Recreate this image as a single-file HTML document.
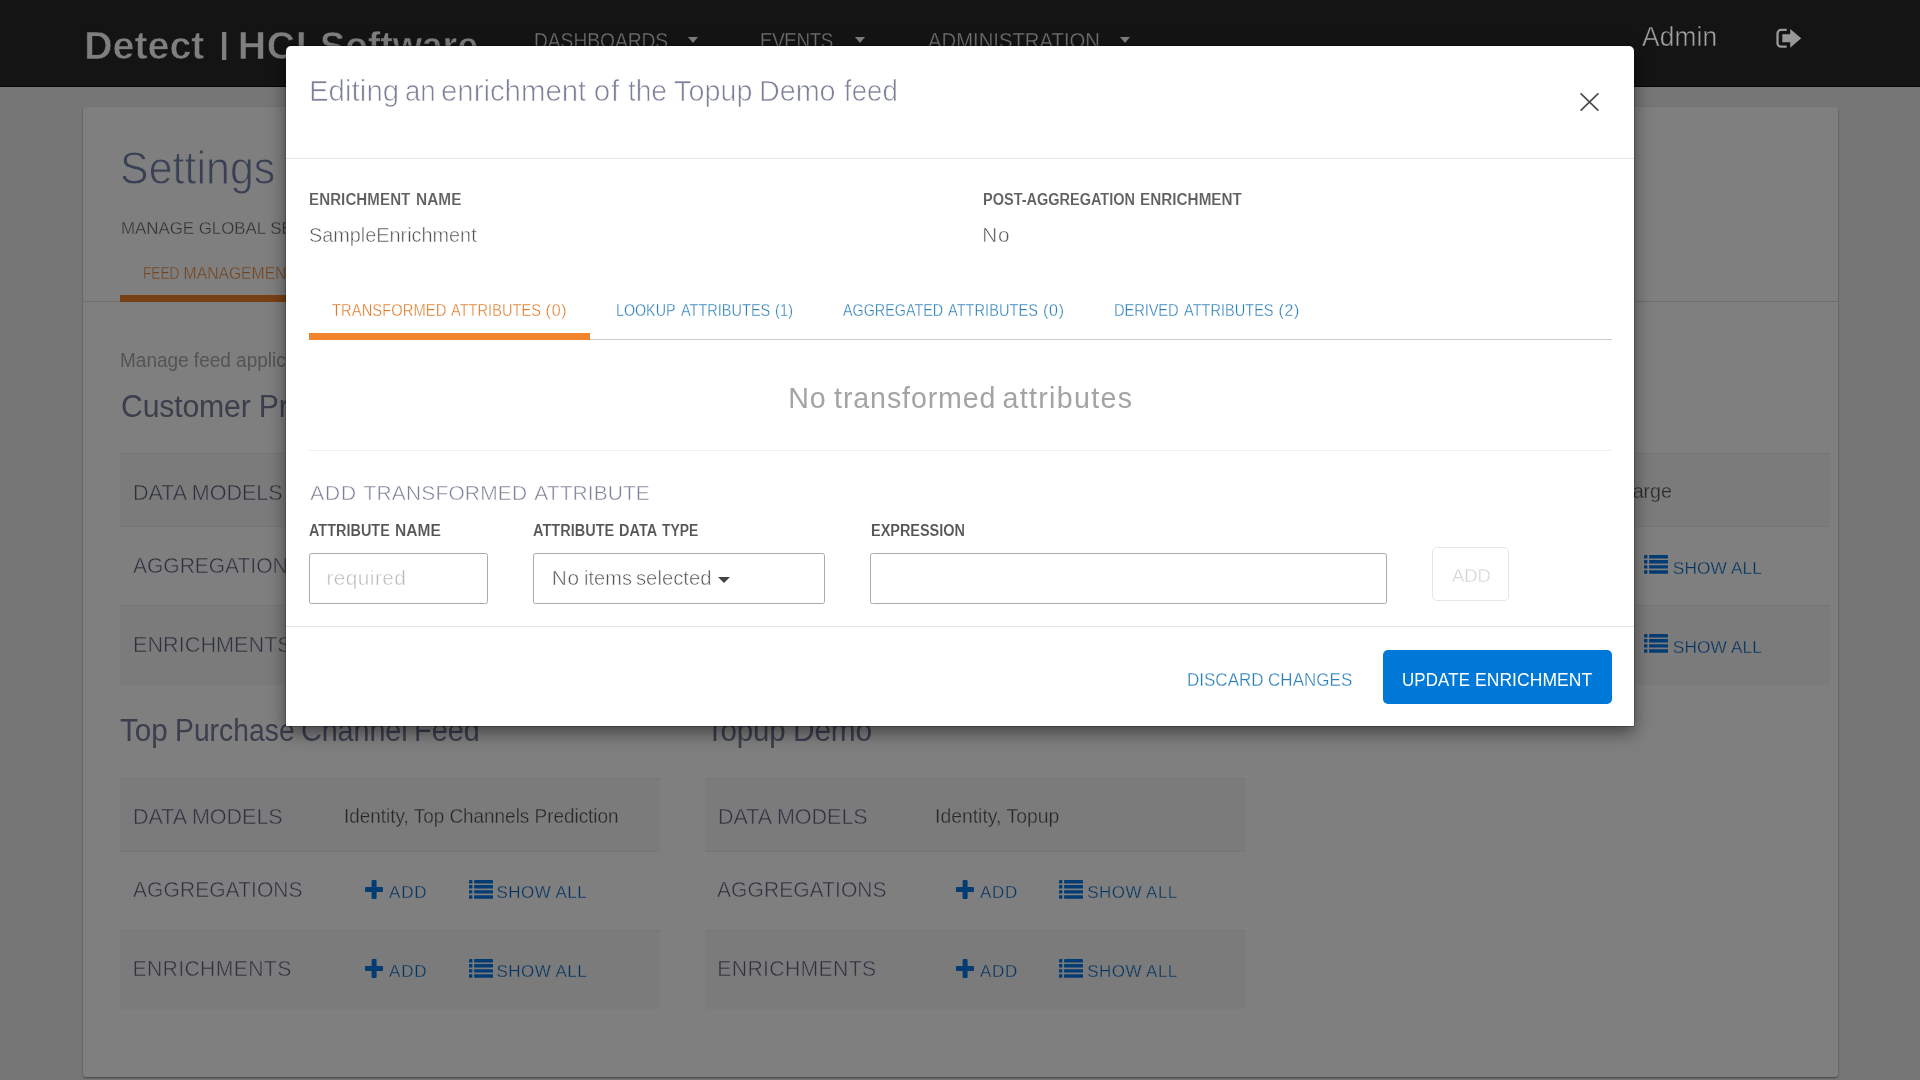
<!DOCTYPE html>
<html lang="en"><head><meta charset="utf-8"><title>Detect | HCL Software - Settings</title>
<style>
html,body{margin:0;padding:0}
body{width:1920px;height:1080px;overflow:hidden;background:#ededed;font-family:"Liberation Sans",sans-serif;position:relative}
.layer{position:absolute;left:0;top:0;width:1920px;height:1080px;overflow:hidden;will-change:transform}
.t{position:absolute;white-space:pre;line-height:1;display:block;transform-origin:0 0}
.abs{position:absolute}
#topbar{left:0;top:0;width:1920px;height:87px;background:#282828}
#card{left:83px;top:107px;width:1755px;height:970px;background:#fff;border-radius:3px;box-shadow:0 1px 2px rgba(0,0,0,.42)}
.caret{width:0;height:0;border-left:5.7px solid transparent;border-right:5.7px solid transparent;border-top:6px solid #fff}
.tbl{background:#fff}
.row{left:0;width:100%;border-top:1px solid #ececec;box-sizing:border-box}
.row.odd{background:#f7f7f7}
#overlay{background:rgba(0,0,0,.5)}
#modal{left:286px;top:46px;width:1348px;height:680px;background:#fff;border-radius:5px 5px 1px 1px;box-shadow:0 0 0 1px rgba(0,0,0,.2),0 6px 18px rgba(0,0,0,.5)}
.hr{height:1px}
.inp{box-sizing:border-box;border:1px solid #aaa;border-radius:2.5px;background:#fff}
svg{position:absolute;overflow:visible}
</style></head>
<body>
<main class="layer" id="page">
  <header class="abs" id="topbar"></header>
  <div class="abs" style="left:0;top:86px;width:1920px;height:1px;background:#0c0c0c"></div>
  <div class="abs caret" style="left:688.3px;top:37px"></div>
  <div class="abs caret" style="left:854.5px;top:37px"></div>
  <div class="abs caret" style="left:1119.5px;top:37px"></div>
  <span class="t" id="pipe" style="left:219.9px;top:30px;font-size:29px;font-weight:700;color:#fff;transform:scaleX(1.14);transform-origin:50% 50%">|</span>
  <section class="abs" id="card"></section>
  <div class="abs hr" style="left:83px;top:301px;width:1755px;background:#ddd"></div>
  <div class="abs" style="left:120px;top:295px;width:200px;height:7px;background:#f0832b"></div>
  <!-- table 1 -->
  <div class="abs tbl" style="left:120px;top:453px;width:1710px;height:232px">
    <div class="abs row odd" style="top:0;height:73px"></div>
    <div class="abs row" style="top:73px;height:79px"></div>
    <div class="abs row odd" style="top:152px;height:80px"></div>
  </div>
  <!-- table 2 -->
  <div class="abs tbl" style="left:120px;top:778px;width:540px;height:231px">
    <div class="abs row odd" style="top:0;height:73px"></div>
    <div class="abs row" style="top:73px;height:79px"></div>
    <div class="abs row odd" style="top:152px;height:79px"></div>
  </div>
  <!-- table 3 -->
  <div class="abs tbl" style="left:705px;top:778px;width:540px;height:231px">
    <div class="abs row odd" style="top:0;height:73px"></div>
    <div class="abs row" style="top:73px;height:79px"></div>
    <div class="abs row odd" style="top:152px;height:79px"></div>
  </div>
  <svg style="left:364.6px;top:880px" width="18" height="19" viewBox="0 0 18 19"><rect x="6.6" y="0" width="5" height="19" rx="1" fill="#0479e6"/><rect x="0" y="7" width="18" height="5" rx="1" fill="#0479e6"/></svg>
<svg style="left:468.9px;top:880px" width="24" height="18.7" viewBox="0 0 24 18.7" fill="#0479e6"><rect x="0" y="0.0" width="3.4" height="3.4" rx=".5"/><rect x="5.1" y="0.0" width="18.9" height="3.4" rx=".5"/><rect x="0" y="5.1" width="3.4" height="3.4" rx=".5"/><rect x="5.1" y="5.1" width="18.9" height="3.4" rx=".5"/><rect x="0" y="10.2" width="3.4" height="3.4" rx=".5"/><rect x="5.1" y="10.2" width="18.9" height="3.4" rx=".5"/><rect x="0" y="15.3" width="3.4" height="3.4" rx=".5"/><rect x="5.1" y="15.3" width="18.9" height="3.4" rx=".5"/></svg>
<svg style="left:364.6px;top:959px" width="18" height="19" viewBox="0 0 18 19"><rect x="6.6" y="0" width="5" height="19" rx="1" fill="#0479e6"/><rect x="0" y="7" width="18" height="5" rx="1" fill="#0479e6"/></svg>
<svg style="left:468.9px;top:959px" width="24" height="18.7" viewBox="0 0 24 18.7" fill="#0479e6"><rect x="0" y="0.0" width="3.4" height="3.4" rx=".5"/><rect x="5.1" y="0.0" width="18.9" height="3.4" rx=".5"/><rect x="0" y="5.1" width="3.4" height="3.4" rx=".5"/><rect x="5.1" y="5.1" width="18.9" height="3.4" rx=".5"/><rect x="0" y="10.2" width="3.4" height="3.4" rx=".5"/><rect x="5.1" y="10.2" width="18.9" height="3.4" rx=".5"/><rect x="0" y="15.3" width="3.4" height="3.4" rx=".5"/><rect x="5.1" y="15.3" width="18.9" height="3.4" rx=".5"/></svg>
<svg style="left:955.6px;top:880px" width="18" height="19" viewBox="0 0 18 19"><rect x="6.6" y="0" width="5" height="19" rx="1" fill="#0479e6"/><rect x="0" y="7" width="18" height="5" rx="1" fill="#0479e6"/></svg>
<svg style="left:1059.4px;top:880px" width="24" height="18.7" viewBox="0 0 24 18.7" fill="#0479e6"><rect x="0" y="0.0" width="3.4" height="3.4" rx=".5"/><rect x="5.1" y="0.0" width="18.9" height="3.4" rx=".5"/><rect x="0" y="5.1" width="3.4" height="3.4" rx=".5"/><rect x="5.1" y="5.1" width="18.9" height="3.4" rx=".5"/><rect x="0" y="10.2" width="3.4" height="3.4" rx=".5"/><rect x="5.1" y="10.2" width="18.9" height="3.4" rx=".5"/><rect x="0" y="15.3" width="3.4" height="3.4" rx=".5"/><rect x="5.1" y="15.3" width="18.9" height="3.4" rx=".5"/></svg>
<svg style="left:955.6px;top:959px" width="18" height="19" viewBox="0 0 18 19"><rect x="6.6" y="0" width="5" height="19" rx="1" fill="#0479e6"/><rect x="0" y="7" width="18" height="5" rx="1" fill="#0479e6"/></svg>
<svg style="left:1059.4px;top:959px" width="24" height="18.7" viewBox="0 0 24 18.7" fill="#0479e6"><rect x="0" y="0.0" width="3.4" height="3.4" rx=".5"/><rect x="5.1" y="0.0" width="18.9" height="3.4" rx=".5"/><rect x="0" y="5.1" width="3.4" height="3.4" rx=".5"/><rect x="5.1" y="5.1" width="18.9" height="3.4" rx=".5"/><rect x="0" y="10.2" width="3.4" height="3.4" rx=".5"/><rect x="5.1" y="10.2" width="18.9" height="3.4" rx=".5"/><rect x="0" y="15.3" width="3.4" height="3.4" rx=".5"/><rect x="5.1" y="15.3" width="18.9" height="3.4" rx=".5"/></svg>
<svg style="left:1644.4px;top:555.3px" width="24" height="18.7" viewBox="0 0 24 18.7" fill="#0479e6"><rect x="0" y="0.0" width="3.4" height="3.4" rx=".5"/><rect x="5.1" y="0.0" width="18.9" height="3.4" rx=".5"/><rect x="0" y="5.1" width="3.4" height="3.4" rx=".5"/><rect x="5.1" y="5.1" width="18.9" height="3.4" rx=".5"/><rect x="0" y="10.2" width="3.4" height="3.4" rx=".5"/><rect x="5.1" y="10.2" width="18.9" height="3.4" rx=".5"/><rect x="0" y="15.3" width="3.4" height="3.4" rx=".5"/><rect x="5.1" y="15.3" width="18.9" height="3.4" rx=".5"/></svg>
<svg style="left:1644.4px;top:633.9px" width="24" height="18.7" viewBox="0 0 24 18.7" fill="#0479e6"><rect x="0" y="0.0" width="3.4" height="3.4" rx=".5"/><rect x="5.1" y="0.0" width="18.9" height="3.4" rx=".5"/><rect x="0" y="5.1" width="3.4" height="3.4" rx=".5"/><rect x="5.1" y="5.1" width="18.9" height="3.4" rx=".5"/><rect x="0" y="10.2" width="3.4" height="3.4" rx=".5"/><rect x="5.1" y="10.2" width="18.9" height="3.4" rx=".5"/><rect x="0" y="15.3" width="3.4" height="3.4" rx=".5"/><rect x="5.1" y="15.3" width="18.9" height="3.4" rx=".5"/></svg>
<span class="t" style="left:84.25px;top:26px;font-size:39.24px;letter-spacing:0.04px;color:#ffffff;font-weight:700;-webkit-text-stroke:0.6px #282828;">Detect</span>
<span class="t" style="left:237.65px;top:26px;font-size:39.24px;letter-spacing:0.7px;color:#ffffff;font-weight:700;-webkit-text-stroke:0.6px #282828;">HCL</span>
<span class="t" style="left:319.75px;top:26px;font-size:39.24px;letter-spacing:-0.148px;color:#ffffff;font-weight:700;transform:scaleX(0.9601);-webkit-text-stroke:0.6px #282828;">Software</span>
<span class="t" style="left:533.85px;top:30px;font-size:22.38px;letter-spacing:-0.052px;color:#e4e4e4;transform:scaleX(0.8591);-webkit-text-stroke:0.35px #282828;">DASHBOARDS</span>
<span class="t" style="left:760.25px;top:30px;font-size:22.38px;letter-spacing:-0.428px;color:#e4e4e4;transform:scaleX(0.84);-webkit-text-stroke:0.35px #282828;">EVENTS</span>
<span class="t" style="left:927.75px;top:30px;font-size:22.38px;letter-spacing:0.018px;color:#e4e4e4;transform:scaleX(0.9048);-webkit-text-stroke:0.35px #282828;">ADMINISTRATION</span>
<span class="t" style="left:119.55px;top:146px;font-size:45.49px;letter-spacing:0.061px;color:#7280a8;transform:scaleX(0.9422);-webkit-text-stroke:0.9px #fff;">Settings</span>
<span class="t" style="left:120.6px;top:220px;font-size:17.01px;letter-spacing:-0.043px;color:#606060;transform:scaleX(0.995);-webkit-text-stroke:0.3px #fff;">MANAGE GLOBAL SETTINGS</span>
<span class="t" style="left:142.52px;top:266px;font-size:15.7px;letter-spacing:0.038px;color:#e8873a;transform:scaleX(0.8638);-webkit-text-stroke:0.3px #fff;">FEED</span>
<span class="t" style="left:183.6px;top:266px;font-size:15.7px;letter-spacing:0.0px;color:#e8873a;-webkit-text-stroke:0.3px #fff;">MANAGEMENT</span>
<span class="t" style="left:120.35px;top:350px;font-size:20.5px;letter-spacing:-0.014px;color:#a8a8a8;transform:scaleX(0.9271);">Manage feed applications</span>
<span class="t" style="left:120.8px;top:391px;font-size:31px;letter-spacing:-0.16px;color:#747c9a;transform:scaleX(0.9737);">Customer Profile</span>
<span class="t" style="left:133.05px;top:482px;font-size:22.53px;letter-spacing:-0.042px;color:#5c627a;transform:scaleX(0.9565);-webkit-text-stroke:0.5px #f7f7f7;">DATA MODELS</span>
<span class="t" style="left:133.05px;top:555px;font-size:22.38px;letter-spacing:-0.039px;color:#5c627a;transform:scaleX(0.9402);-webkit-text-stroke:0.5px #fff;">AGGREGATIONS</span>
<span class="t" style="left:132.5px;top:634px;font-size:22.38px;letter-spacing:0.021px;color:#5c627a;transform:scaleX(0.9665);-webkit-text-stroke:0.5px #f7f7f7;">ENRICHMENTS</span>
<span class="t" style="left:1587.05px;top:481px;font-size:20.5px;letter-spacing:-0.09px;color:#505050;transform:scaleX(0.9616);-webkit-text-stroke:0.3px #f7f7f7;">Recharge</span>
<span class="t" style="left:1672.8px;top:560px;font-size:17.3px;letter-spacing:0.114px;color:#0868c0;-webkit-text-stroke:0.3px #fff;">SHOW ALL</span>
<span class="t" style="left:1672.8px;top:639px;font-size:17.3px;letter-spacing:0.114px;color:#0868c0;-webkit-text-stroke:0.3px #f7f7f7;">SHOW ALL</span>
<span class="t" style="left:119.65px;top:715px;font-size:30.6px;letter-spacing:0.0px;color:#747c9a;transform:scaleX(0.9681);">Top</span>
<span class="t" style="left:174.5px;top:715px;font-size:30.6px;letter-spacing:0.062px;color:#747c9a;transform:scaleX(0.9222);">Purchase</span>
<span class="t" style="left:300.75px;top:715px;font-size:30.6px;letter-spacing:-0.071px;color:#747c9a;transform:scaleX(0.9396);">Channel</span>
<span class="t" style="left:414.45px;top:715px;font-size:30.6px;letter-spacing:0.07px;color:#747c9a;transform:scaleX(0.9409);">Feed</span>
<span class="t" style="left:705.7px;top:715px;font-size:30.6px;letter-spacing:-0.104px;color:#747c9a;transform:scaleX(0.9605);">Topup</span>
<span class="t" style="left:793.0px;top:715px;font-size:30.6px;letter-spacing:-0.205px;color:#747c9a;transform:scaleX(0.9769);">Demo</span>
<span class="t" style="left:133.05px;top:806px;font-size:21.66px;letter-spacing:-0.04px;color:#5c627a;transform:scaleX(0.9953);-webkit-text-stroke:0.5px #f7f7f7;">DATA MODELS</span>
<span class="t" style="left:344.3px;top:806px;font-size:20.5px;letter-spacing:-0.0px;color:#505050;transform:scaleX(0.922);-webkit-text-stroke:0.3px #f7f7f7;">Identity, Top Channels Prediction</span>
<span class="t" style="left:132.55px;top:880px;font-size:21.37px;letter-spacing:0.056px;color:#5c627a;transform:scaleX(0.9842);-webkit-text-stroke:0.5px #fff;">AGGREGATIONS</span>
<span class="t" style="left:389.1px;top:884px;font-size:17.01px;letter-spacing:0.8px;color:#0868c0;-webkit-text-stroke:0.3px #fff;">ADD</span>
<span class="t" style="left:496.45px;top:884px;font-size:17.01px;letter-spacing:0.486px;color:#0868c0;-webkit-text-stroke:0.3px #fff;">SHOW ALL</span>
<span class="t" style="left:132.5px;top:958px;font-size:21.22px;letter-spacing:0.32px;color:#5c627a;-webkit-text-stroke:0.5px #f7f7f7;">ENRICHMENTS</span>
<span class="t" style="left:389.1px;top:963px;font-size:17.01px;letter-spacing:0.8px;color:#0868c0;-webkit-text-stroke:0.3px #f7f7f7;">ADD</span>
<span class="t" style="left:496.45px;top:963px;font-size:17.01px;letter-spacing:0.486px;color:#0868c0;-webkit-text-stroke:0.3px #f7f7f7;">SHOW ALL</span>
<span class="t" style="left:717.85px;top:806px;font-size:21.66px;letter-spacing:-0.04px;color:#5c627a;transform:scaleX(0.9953);-webkit-text-stroke:0.5px #f7f7f7;">DATA MODELS</span>
<span class="t" style="left:935.4px;top:806px;font-size:20.5px;letter-spacing:0.0px;color:#505050;transform:scaleX(0.9457);-webkit-text-stroke:0.3px #f7f7f7;">Identity, Topup</span>
<span class="t" style="left:717.35px;top:880px;font-size:21.37px;letter-spacing:0.056px;color:#5c627a;transform:scaleX(0.9842);-webkit-text-stroke:0.5px #fff;">AGGREGATIONS</span>
<span class="t" style="left:979.9px;top:884px;font-size:17.01px;letter-spacing:0.8px;color:#0868c0;-webkit-text-stroke:0.3px #fff;">ADD</span>
<span class="t" style="left:1087.3px;top:884px;font-size:17.01px;letter-spacing:0.429px;color:#0868c0;-webkit-text-stroke:0.3px #fff;">SHOW ALL</span>
<span class="t" style="left:717.3px;top:958px;font-size:21.22px;letter-spacing:0.32px;color:#5c627a;-webkit-text-stroke:0.5px #f7f7f7;">ENRICHMENTS</span>
<span class="t" style="left:979.9px;top:963px;font-size:17.01px;letter-spacing:0.8px;color:#0868c0;-webkit-text-stroke:0.3px #f7f7f7;">ADD</span>
<span class="t" style="left:1087.3px;top:963px;font-size:17.01px;letter-spacing:0.429px;color:#0868c0;-webkit-text-stroke:0.3px #f7f7f7;">SHOW ALL</span>
</main>
<div class="layer" id="overlay"></div>
<div class="layer" id="modalwrap" role="dialog" aria-modal="true" aria-label="Editing an enrichment of the Topup Demo feed">
  <div class="abs" id="modal"></div>
  <div class="abs hr" style="left:286px;top:158px;width:1348px;background:#e5e5e5"></div>
  <div class="abs hr" style="left:286px;top:626px;width:1348px;background:#e5e5e5"></div>
  <div class="abs hr" style="left:309px;top:339px;width:1303px;background:#ccc"></div>
  <div class="abs" style="left:309px;top:333px;width:281px;height:7px;background:#f0832b"></div>
  <div class="abs hr" style="left:309px;top:450px;width:1303px;background:#eee"></div>
  <div class="abs inp" style="left:309px;top:553px;width:179px;height:51px"></div>
  <div class="abs inp" style="left:533px;top:553px;width:292px;height:51px"></div>
  <div class="abs inp" style="left:870px;top:553px;width:517px;height:51px"></div>
  <div class="abs" style="left:718px;top:577px;width:0;height:0;border-left:6px solid transparent;border-right:6px solid transparent;border-top:6.3px solid #444"></div>
  <div class="abs" style="left:1432px;top:547px;width:77px;height:54px;box-sizing:border-box;border:1px solid #e6e6e6;border-radius:5px"></div>
  <div class="abs" style="left:1383px;top:650px;width:229px;height:54px;background:#0078d7;border-radius:5px"></div>
  <svg style="left:1775px;top:28px" width="27" height="21" viewBox="0 0 27 21"><path d="M11.7 1.95H6a3.5 3.5 0 0 0-3.5 3.5v9.7a3.5 3.5 0 0 0 3.5 3.5h5.7" fill="none" stroke="#98989b" stroke-width="2.3"/><path d="M7.3 6.3h7.9V1L26.2 10.3 15.2 19.7v-5.5H7.3z" fill="#98989b"/></svg>
  <svg style="left:1580px;top:93px" width="19" height="18" viewBox="0 0 19 18"><path d="M0.6 0.3L18.4 17.7M18.4 0.3L0.6 17.7" stroke="#4c4c4c" stroke-width="1.7" fill="none"/></svg>
<span class="t" style="left:1641.55px;top:23px;font-size:27.62px;letter-spacing:0.158px;color:#a0a0a0;transform:scaleX(0.9519);-webkit-text-stroke:0.45px #141414;">Admin</span>
<span class="t" style="left:309.4px;top:76px;font-size:29.6px;letter-spacing:0.068px;color:#7c8098;transform:scaleX(0.9908);-webkit-text-stroke:0.7px #fff;">Editing</span>
<span class="t" style="left:405.2px;top:76px;font-size:29.6px;letter-spacing:0.0px;color:#7c8098;transform:scaleX(0.9333);-webkit-text-stroke:0.7px #fff;">an</span>
<span class="t" style="left:441.15px;top:76px;font-size:29.6px;letter-spacing:-0.045px;color:#7c8098;transform:scaleX(0.9952);-webkit-text-stroke:0.7px #fff;">enrichment</span>
<span class="t" style="left:593.85px;top:76px;font-size:29.6px;letter-spacing:0.8px;color:#7c8098;-webkit-text-stroke:0.7px #fff;">of</span>
<span class="t" style="left:627.65px;top:76px;font-size:29.6px;letter-spacing:-0.209px;color:#7c8098;transform:scaleX(0.9575);-webkit-text-stroke:0.7px #fff;">the</span>
<span class="t" style="left:673.5px;top:76px;font-size:29.6px;letter-spacing:0.052px;color:#7c8098;transform:scaleX(0.9696);-webkit-text-stroke:0.7px #fff;">Topup</span>
<span class="t" style="left:759.25px;top:76px;font-size:29.6px;letter-spacing:-0.068px;color:#7c8098;transform:scaleX(0.9724);-webkit-text-stroke:0.7px #fff;">Demo</span>
<span class="t" style="left:844.25px;top:76px;font-size:29.6px;letter-spacing:0.072px;color:#7c8098;transform:scaleX(0.9304);-webkit-text-stroke:0.7px #fff;">feed</span>
<span class="t" style="left:309.0px;top:192px;font-size:16.72px;letter-spacing:0.123px;color:#606060;font-weight:700;transform:scaleX(0.9009);-webkit-text-stroke:0.1px #fff;">ENRICHMENT</span>
<span class="t" style="left:416.25px;top:192px;font-size:16.72px;letter-spacing:0.072px;color:#606060;font-weight:700;transform:scaleX(0.9188);-webkit-text-stroke:0.1px #fff;">NAME</span>
<span class="t" style="left:983.0px;top:192px;font-size:16.72px;letter-spacing:-0.015px;color:#606060;font-weight:700;transform:scaleX(0.8694);-webkit-text-stroke:0.1px #fff;">POST-AGGREGATION</span>
<span class="t" style="left:1139.9px;top:192px;font-size:16.72px;letter-spacing:0.048px;color:#606060;font-weight:700;transform:scaleX(0.9117);-webkit-text-stroke:0.1px #fff;">ENRICHMENT</span>
<span class="t" style="left:308.7px;top:225px;font-size:20.8px;letter-spacing:0.0px;color:#555;transform:scaleX(0.9543);-webkit-text-stroke:0.5px #fff;">SampleEnrichment</span>
<span class="t" style="left:982.2px;top:225px;font-size:20.8px;letter-spacing:0.8px;color:#555;-webkit-text-stroke:0.5px #fff;">No</span>
<span class="t" style="left:331.65px;top:303px;font-size:15.99px;letter-spacing:0.066px;color:#de7a26;transform:scaleX(0.9211);-webkit-text-stroke:0.3px #fff;">TRANSFORMED</span>
<span class="t" style="left:450.9px;top:303px;font-size:15.99px;letter-spacing:0.048px;color:#de7a26;transform:scaleX(0.9102);-webkit-text-stroke:0.3px #fff;">ATTRIBUTES</span>
<span class="t" style="left:545.55px;top:303px;font-size:15.99px;letter-spacing:0.8px;color:#de7a26;-webkit-text-stroke:0.3px #fff;">(0)</span>
<span class="t" style="left:616.0px;top:303px;font-size:15.99px;letter-spacing:0.0px;color:#2a7fb8;transform:scaleX(0.8923);-webkit-text-stroke:0.3px #fff;">LOOKUP</span>
<span class="t" style="left:681.3px;top:303px;font-size:15.99px;letter-spacing:0.0px;color:#2a7fb8;transform:scaleX(0.9082);-webkit-text-stroke:0.3px #fff;">ATTRIBUTES</span>
<span class="t" style="left:775.4px;top:303px;font-size:15.99px;letter-spacing:0.222px;color:#2a7fb8;transform:scaleX(0.9);-webkit-text-stroke:0.3px #fff;">(1)</span>
<span class="t" style="left:842.75px;top:303px;font-size:15.99px;letter-spacing:-0.0px;color:#2a7fb8;transform:scaleX(0.8964);-webkit-text-stroke:0.3px #fff;">AGGREGATED</span>
<span class="t" style="left:948.4px;top:303px;font-size:15.99px;letter-spacing:0.048px;color:#2a7fb8;transform:scaleX(0.9102);-webkit-text-stroke:0.3px #fff;">ATTRIBUTES</span>
<span class="t" style="left:1043.0px;top:303px;font-size:15.99px;letter-spacing:0.8px;color:#2a7fb8;-webkit-text-stroke:0.3px #fff;">(0)</span>
<span class="t" style="left:1114.0px;top:303px;font-size:15.99px;letter-spacing:-0.144px;color:#2a7fb8;transform:scaleX(0.9217);-webkit-text-stroke:0.3px #fff;">DERIVED</span>
<span class="t" style="left:1184.25px;top:303px;font-size:15.99px;letter-spacing:0.024px;color:#2a7fb8;transform:scaleX(0.9092);-webkit-text-stroke:0.3px #fff;">ATTRIBUTES</span>
<span class="t" style="left:1278.5px;top:303px;font-size:15.99px;letter-spacing:0.6px;color:#2a7fb8;-webkit-text-stroke:0.3px #fff;">(2)</span>
<span class="t" style="left:788.2px;top:384px;font-size:28.6px;letter-spacing:0.8px;color:#a4a4a4;">No</span>
<span class="t" style="left:834.1px;top:384px;font-size:28.6px;letter-spacing:0.88px;color:#a4a4a4;">transformed</span>
<span class="t" style="left:1002.55px;top:384px;font-size:28.6px;letter-spacing:1.311px;color:#a4a4a4;">attributes</span>
<span class="t" style="left:310.32px;top:483px;font-size:20.93px;letter-spacing:0.8px;color:#7c8098;-webkit-text-stroke:0.5px #fff;">ADD</span>
<span class="t" style="left:363.5px;top:483px;font-size:20.93px;letter-spacing:0.2px;color:#7c8098;-webkit-text-stroke:0.5px #fff;">TRANSFORMED</span>
<span class="t" style="left:534.35px;top:483px;font-size:20.93px;letter-spacing:0.099px;color:#7c8098;-webkit-text-stroke:0.5px #fff;">ATTRIBUTE</span>
<span class="t" style="left:308.55px;top:523px;font-size:15.84px;letter-spacing:0.028px;color:#555;font-weight:700;transform:scaleX(0.9102);-webkit-text-stroke:0.1px #fff;">ATTRIBUTE</span>
<span class="t" style="left:394.65px;top:523px;font-size:15.84px;letter-spacing:0.068px;color:#555;font-weight:700;transform:scaleX(0.98);-webkit-text-stroke:0.1px #fff;">NAME</span>
<span class="t" style="left:533.2px;top:523px;font-size:15.84px;letter-spacing:0.027px;color:#555;font-weight:700;transform:scaleX(0.9159);-webkit-text-stroke:0.1px #fff;">ATTRIBUTE</span>
<span class="t" style="left:619.1px;top:523px;font-size:15.84px;letter-spacing:0.073px;color:#555;font-weight:700;transform:scaleX(0.915);-webkit-text-stroke:0.1px #fff;">DATA</span>
<span class="t" style="left:662.1px;top:523px;font-size:15.84px;letter-spacing:0.0px;color:#555;font-weight:700;transform:scaleX(0.878);-webkit-text-stroke:0.1px #fff;">TYPE</span>
<span class="t" style="left:870.8px;top:523px;font-size:15.84px;letter-spacing:-0.024px;color:#555;font-weight:700;transform:scaleX(0.9149);-webkit-text-stroke:0.1px #fff;">EXPRESSION</span>
<span class="t" style="left:326.5px;top:568px;font-size:20.8px;letter-spacing:0.429px;color:#b8b8b8;-webkit-text-stroke:0.5px #fff;">required</span>
<span class="t" style="left:551.75px;top:568px;font-size:20.8px;letter-spacing:0.8px;color:#555;-webkit-text-stroke:0.5px #fff;">No</span>
<span class="t" style="left:583.75px;top:568px;font-size:20.8px;letter-spacing:0.052px;color:#555;transform:scaleX(0.9604);-webkit-text-stroke:0.5px #fff;">items</span>
<span class="t" style="left:636.0px;top:568px;font-size:20.8px;letter-spacing:0.0px;color:#555;transform:scaleX(0.9733);-webkit-text-stroke:0.5px #fff;">selected</span>
<span class="t" style="left:1451.6px;top:566px;font-size:19.26px;letter-spacing:-0.105px;color:#d4d4d4;transform:scaleX(0.96);-webkit-text-stroke:0.4px #fff;">ADD</span>
<span class="t" style="left:1186.7px;top:671px;font-size:18.17px;letter-spacing:0.0px;color:#2a7fb8;transform:scaleX(0.9375);-webkit-text-stroke:0.3px #fff;">DISCARD</span>
<span class="t" style="left:1267.7px;top:671px;font-size:18.17px;letter-spacing:0.072px;color:#2a7fb8;transform:scaleX(0.9341);-webkit-text-stroke:0.3px #fff;">CHANGES</span>
<span class="t" style="left:1401.75px;top:671px;font-size:18.17px;letter-spacing:0.172px;color:#fff;transform:scaleX(0.9282);">UPDATE</span>
<span class="t" style="left:1474.75px;top:671px;font-size:18.17px;letter-spacing:0.046px;color:#fff;transform:scaleX(0.9642);">ENRICHMENT</span>
</div>
</body></html>
